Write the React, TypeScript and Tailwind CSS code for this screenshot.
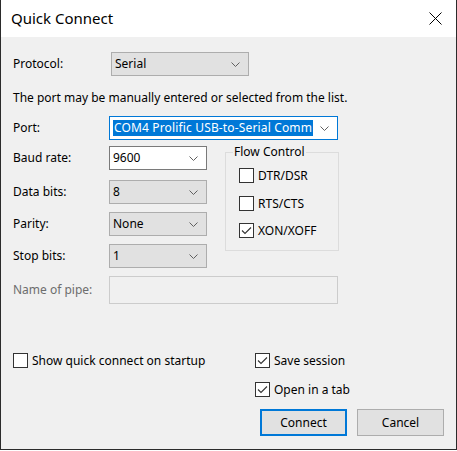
const font = "font-['Segoe_UI','Noto_Sans',sans-serif]";

function Chevron() {
  return (
    <svg width="9" height="5" viewBox="0 0 9 5" className="shrink-0">
      <path d="M0.5 0.5 L4.5 4.5 L8.5 0.5" fill="none" stroke="#606060" strokeWidth="1" />
    </svg>
  );
}

type ComboKind = 'list' | 'edit' | 'focus';

function Combo({ value, width, kind = 'list' }: { value: string; width: string; kind?: ComboKind }) {
  const box =
    kind === 'list'
      ? 'bg-[#e1e1e1] border-[#adadad]'
      : kind === 'edit'
      ? 'bg-white border-[#7a7a7a]'
      : 'bg-white border-[#0078d7]';
  return (
    <div className={`${width} h-[24px] border ${box} flex items-center pl-[3px] pr-[8px]`}>
      {kind === 'focus' ? (
        <span className="bg-[#0078d7] text-white h-[16px] leading-[16px] px-[1px] tracking-[0.15px] whitespace-nowrap shrink-0">
          {value}
        </span>
      ) : (
        <span className="whitespace-nowrap">{value}</span>
      )}
      <div className="flex-1" />
      <Chevron />
    </div>
  );
}

function CheckBox({ label, checked = false }: { label: string; checked?: boolean }) {
  return (
    <div className="flex items-center gap-[4px] leading-[15px]">
      <div className="w-[15px] h-[15px] border border-[#333333] bg-white flex items-center justify-center">
        {checked && (
          <svg width="11" height="9" viewBox="0 0 11 9">
            <path d="M1 4.5 L4 7.5 L10 1.5" fill="none" stroke="#333333" strokeWidth="1.1" />
          </svg>
        )}
      </div>
      <span className="text-[#000]">{label}</span>
    </div>
  );
}

function Row({ label, children, className = '' }: { label: string; children: React.ReactNode; className?: string }) {
  return (
    <div className={`flex items-center ${className}`}>
      <span className="w-[96px] shrink-0">{label}</span>
      {children}
    </div>
  );
}

export default function App() {
  return (
    <div className={`${font} text-[12px] text-black w-[457px] h-[450px] bg-[#f0f0f0] border-x border-b border-[#2b2b2b] flex flex-col`}>
      {/* Title bar */}
      <div className="h-[37px] bg-white flex items-center pl-[10px] pr-[14px] shrink-0">
        <span className="text-[15px] leading-none pb-[1px]">Quick Connect</span>
        <div className="flex-1" />
        <svg width="13" height="13" viewBox="0 0 13 13">
          <path d="M0.5 0.5 L12.5 12.5 M12.5 0.5 L0.5 12.5" stroke="#000" strokeWidth="1" />
        </svg>
      </div>

      {/* Body */}
      <div className="flex-1 flex flex-col pl-[12px] pr-[12px]">
        <div className="flex items-center mt-[15px]">
          <span className="w-[98px] shrink-0">Protocol:</span>
          <Combo value="Serial" width="w-[138px]" />
        </div>

        <p className="mt-[14px] leading-[16px]">The port may be manually entered or selected from the list.</p>

        <Row label="Port:" className="mt-[10px]">
          <Combo value="COM4 Prolific USB-to-Serial Comm" width="w-[229px]" kind="focus" />
        </Row>

        <div className="flex mt-[6px]">
          <div className="flex flex-col">
            <Row label="Baud rate:">
              <Combo value="9600" width="w-[98px]" kind="edit" />
            </Row>
            <Row label="Data bits:" className="mt-[10px]">
              <Combo value="8" width="w-[98px]" />
            </Row>
            <Row label="Parity:" className="mt-[8px]">
              <Combo value="None" width="w-[98px]" />
            </Row>
            <Row label="Stop bits:" className="mt-[8px]">
              <Combo value="1" width="w-[98px]" />
            </Row>
          </div>

          {/* Flow Control group */}
          <div className="relative ml-[18px] mt-[6px] w-[114px] h-[99px] border border-[#dcdcdc] flex flex-col pl-[13px] pt-[15px]">
            <span className="absolute -top-[9px] left-[7px] px-[1px] bg-[#f0f0f0] leading-[16px]">Flow Control</span>
            <CheckBox label="DTR/DSR" />
            <div className="mt-[13px]">
              <CheckBox label="RTS/CTS" />
            </div>
            <div className="mt-[12px]">
              <CheckBox label="XON/XOFF" checked />
            </div>
          </div>
        </div>

        <Row label="Name of pipe:" className="mt-[8px] text-[#6d6d6d]">
          <div className="w-[229px] h-[28px] border border-[#cccccc] bg-[#f0f0f0]" />
        </Row>

        <div className="flex mt-[49px]">
          <div className="w-[242px] shrink-0">
            <CheckBox label="Show quick connect on startup" />
          </div>
          <div className="flex flex-col">
            <CheckBox label="Save session" checked />
            <div className="mt-[14px]">
              <CheckBox label="Open in a tab" checked />
            </div>
          </div>
        </div>

        <div className="flex justify-end gap-[10px] mt-[12px]">
          <button className="w-[87px] h-[27px] border-2 border-[#0078d7] bg-[#e1e1e1]">Connect</button>
          <button className="w-[87px] h-[27px] border border-[#adadad] bg-[#e1e1e1]">Cancel</button>
        </div>
      </div>
    </div>
  );
}
